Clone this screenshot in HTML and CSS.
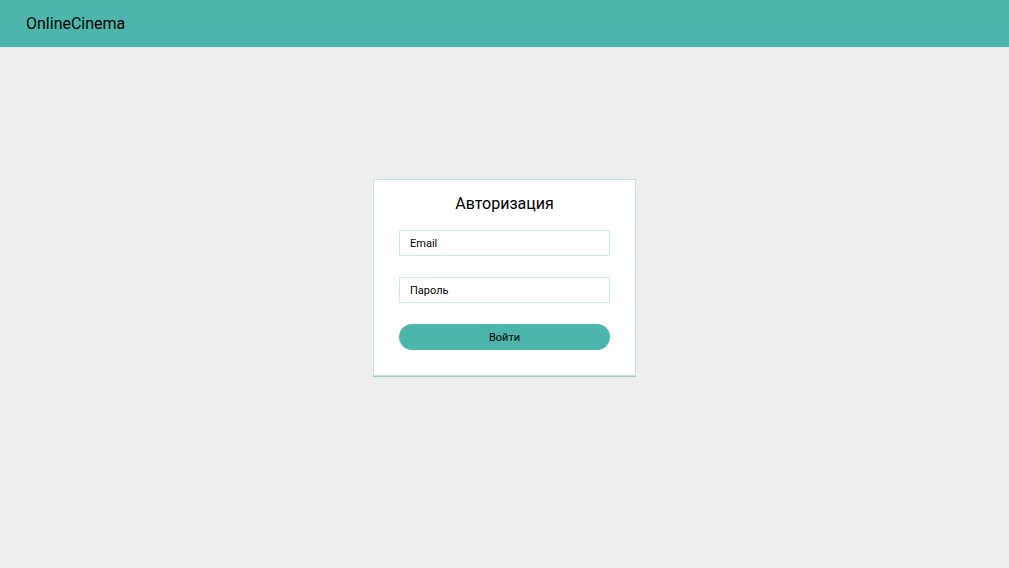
FILE: index.html
```html
<!DOCTYPE html>
<html lang="ru">
<head>
<meta charset="utf-8">
<meta name="viewport" content="width=device-width, initial-scale=1">
<title>OnlineCinema</title>
<link rel="stylesheet" href="styles.css">
</head>
<body>
<header class="header"><a class="logo" href="#">OnlineCinema</a></header>
<main class="main">
<form class="card">
<h1 class="title">Авторизация</h1>
<div class="fields">
<input class="field" type="email" placeholder="Email" aria-label="Email">
<input class="field" type="password" placeholder="Пароль" aria-label="Пароль">
<button class="submit" type="submit">Войти</button>
</div>
</form>
</main>
</body>
</html>
```
FILE: styles.css
```css
* {
  box-sizing: border-box;
}

body {
  margin: 0;
  min-height: 100vh;
  display: flex;
  flex-direction: column;
  background: #eeeeee;
  color: #000;
  font-family: Roboto, sans-serif;
}

.header {
  padding: 12px 26px;
  background: #4db6ac;
}

.logo {
  display: block;
  color: inherit;
  font-size: 16px;
  line-height: 23px;
  text-decoration: none;
}

.main {
  flex: 1;
  display: flex;
  align-items: center;
  justify-content: center;
  padding: 16px 16px 76px;
}

.card {
  width: 100%;
  max-width: 263px;
  padding: 12px 25px 25px;
  background: #fff;
  border: 1px solid #b9e8e2;
  box-shadow: 0 1px 0 #a9cbc7;
}

.title {
  margin: 0 0 14px;
  font-size: 16px;
  font-weight: 400;
  line-height: 24px;
  text-align: center;
}

.fields {
  display: flex;
  flex-direction: column;
  gap: 21px;
}

.field,
.submit {
  width: 100%;
  height: 26px;
  padding: 1px 10px 0;
  color: #000;
  font-family: inherit;
  font-size: 11px;
}

.field {
  background: #fff;
  border: 1px solid #c3efea;
  border-radius: 0;
}

.field::placeholder {
  color: #000;
  opacity: 1;
}

.submit {
  background: #4db6ac;
  border: 0;
  border-radius: 13px;
  cursor: pointer;
}
```
